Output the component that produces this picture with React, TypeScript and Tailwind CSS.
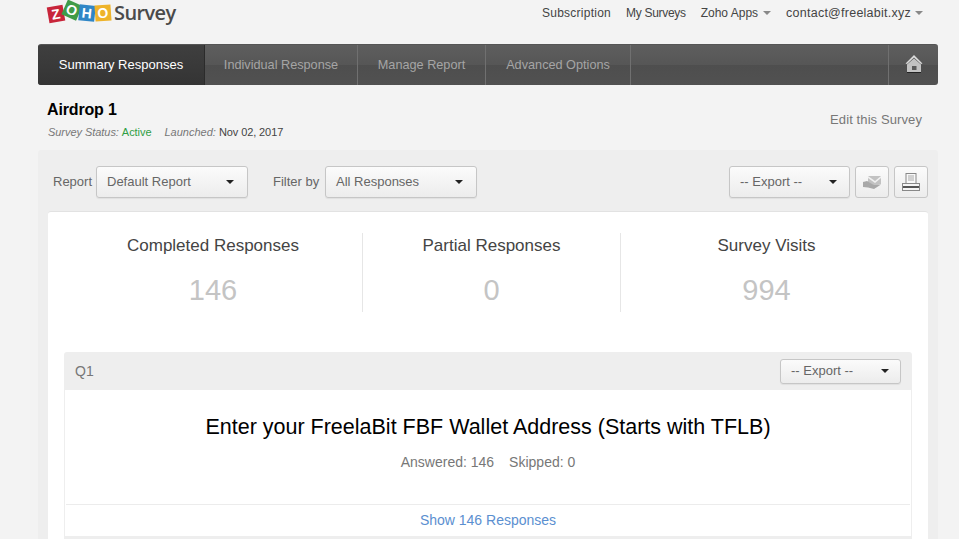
const arial = "font-['Liberation_Sans',Arial,sans-serif]";

function Caret({ className = "border-t-[#222]" }: { className?: string }) {
  return <span className={`inline-block w-0 h-0 border-x-[4px] border-x-transparent border-t-[4px] ${className}`} />;
}

function Select({ label, w, h = "h-[32px]", pl = "pl-[10px]", pr = "pr-[13px]" }: { label: string; w: string; h?: string; pl?: string; pr?: string }) {
  return (
    <div className={`${w} ${h} ${pl} ${pr} flex items-center justify-between rounded-[3px] border border-[#c6c6c6] bg-gradient-to-b from-[#fbfbfb] to-[#ececec] text-[13px] text-[#666] shadow-[0_1px_1px_rgba(0,0,0,0.06)]`}>
      <span>{label}</span>
      <Caret />
    </div>
  );
}

function Logo() {
  const tiles = [
    { c: "Z", bg: "bg-[#c8253a]", r: "-rotate-[10deg]", mt: "mt-[6px]" },
    { c: "O", bg: "bg-[#3f9b48]", r: "rotate-[24deg]", mt: "mt-[2px]" },
    { c: "H", bg: "bg-[#2f86c6]", r: "rotate-[6deg]", mt: "mt-[5px]" },
    { c: "O", bg: "bg-[#eeb32a]", r: "-rotate-[4deg]", mt: "mt-[5px]" },
  ];
  return (
    <div className="flex items-start">
      {tiles.map((t, i) => (
        <span key={i} className={`${t.bg} ${t.r} ${t.mt} w-[15.5px] h-[16px] flex items-center justify-center text-white font-bold text-[14px] leading-none`}>{t.c}</span>
      ))}
      <span className="ml-[4px] mt-[1px] text-[20px] leading-[24px] font-['Open_Sans',sans-serif] font-semibold text-[#4a4a4a] tracking-[-0.6px]">Survey</span>
    </div>
  );
}

function Tab({ label, active, w }: { label: string; active?: boolean; w: string }) {
  return (
    <div className={`${w} h-full flex items-center justify-center border-r ${active ? "text-[13px] bg-gradient-to-b from-[#3f3f3f] to-[#343434] text-white border-r-[#2b2b2b]" : "pt-[1px] text-[12.7px] border-[#707070] text-[#a5a5a5]"}`}>
      {label}
    </div>
  );
}

function Stat({ title, value, w, border }: { title: string; value: string; w: string; border?: boolean }) {
  return (
    <div className={`${w} h-[79px] flex flex-col items-center ${border ? "border-r border-[#e6e6e6]" : ""}`}>
      <div className="mt-[1px] text-[17px] leading-[24px] text-[#444]">{title}</div>
      <div className="mt-[14px] text-[29px] leading-[36px] text-[#c4c4c4]">{value}</div>
    </div>
  );
}

export default function App() {
  return (
    <div className={`w-[959px] h-[539px] overflow-hidden bg-[#f3f3f3] ${arial}`}>
      <div className="h-[44px] pl-[48px] pr-[36px] flex justify-between items-start">
        <Logo />
        <div className="flex items-center text-[12px] text-[#444] mt-[5px] h-[16px]">
          <span className="tracking-[0.25px]">Subscription</span>
          <span className="ml-[15px] -tracking-[0.3px]">My Surveys</span>
          <span className="ml-[15px] flex items-center gap-[5px]">Zoho Apps <Caret className="border-t-[#888]" /></span>
          <span className="ml-[15px] flex items-center gap-[4px] text-[12.5px] tracking-[0.25px]">contact@freelabit.xyz <Caret className="border-t-[#888]" /></span>
        </div>
      </div>

      <div className="ml-[38px] w-[900px] h-[41px] rounded-[3px] overflow-hidden flex bg-[linear-gradient(180deg,#5e5e5e_0%,#565656_50%,#4e4e4e_50%,#515151_100%)] border-t border-[#555]">
        <Tab label="Summary Responses" active w="w-[167px]" />
        <Tab label="Individual Response" w="w-[153px]" />
        <Tab label="Manage Report" w="w-[128px]" />
        <Tab label="Advanced Options" w="w-[145px]" />
        <div className="flex-1" />
        <div className="w-[50px] flex items-center justify-center border-l border-[#707070]">
          <svg className="-mt-[3px]" width="20" height="20" viewBox="0 0 20 20">
            <path d="M10 1 L1.5 9.5 L3 10 L10 3.5 L17 10 L18.5 9.5 Z" fill="#dcdcdc" />
            <path d="M3 10.5 L10 4.5 L17 10.5 V18 H3 Z" fill="#c2c2c2" />
            <rect x="8" y="12" width="4.5" height="4" fill="#5a5a5a" />
            <rect x="3" y="18" width="14" height="1" fill="#222" />
          </svg>
        </div>
      </div>

      <div className="pl-[47px] pr-[37px] mt-[14px] h-[51px] flex justify-between">
        <div>
          <div className="text-[16px] leading-[22px] font-bold text-black tracking-[-0.15px]">Airdrop 1</div>
          <div className="mt-[4px] text-[11px] leading-[14px] flex gap-[13px] pl-[1px]">
            <span className="text-[#777] italic -tracking-[0.05px]">Survey Status: <span className="not-italic text-[#2f9e44]">Active</span></span>
            <span className="text-[#777] italic">Launched: <span className="not-italic text-[#444] -tracking-[0.1px]">Nov 02, 2017</span></span>
          </div>
        </div>
        <div className="text-[13px] text-[#777] mt-[11px] tracking-[0.1px]">Edit this Survey</div>
      </div>

      <div className="ml-[38px] w-[900px] h-[400px] rounded-[3px] bg-[#eeeeee] px-[10px] pt-[16px]">
        <div className="h-[45px] flex items-start pl-[5px] text-[13px] text-[#666]">
          <div className="w-[38px] h-[32px] flex items-center mr-[5px]">Report</div>
          <Select label="Default Report" w="w-[152px]" />
          <div className="w-[47px] h-[32px] flex items-center ml-[25px] mr-[5px] whitespace-nowrap">Filter by</div>
          <Select label="All Responses" w="w-[152px]" />
          <div className="flex-1" />
          <Select label="-- Export --" w="w-[121px]" pr="pr-[12px]" />
          <div className="ml-[5px] w-[34px] h-[32px] rounded-[3px] border border-[#c6c6c6] bg-gradient-to-b from-[#fbfbfb] to-[#ececec] flex items-center justify-center">
            <svg width="22" height="18" viewBox="0 0 22 18">
              <path d="M7 3 H20 V11 L14 13 L7 9 Z" fill="#c2c2c2" />
              <path d="M7 3 L14 8 L20 3 L20 5 L14 10 L7 5 Z" fill="#f0f0f0" />
              <path d="M2 9 L6 8 L13 12 H17 L20 11.5 L13 16 L7 14.5 L2 14 Z" fill="#a8a8a8" />
            </svg>
          </div>
          <div className="ml-[5px] w-[34px] h-[32px] rounded-[3px] border border-[#c6c6c6] bg-gradient-to-b from-[#fbfbfb] to-[#ececec] flex items-center justify-center">
            <svg width="18" height="18" viewBox="0 0 18 18">
              <rect x="4" y="0.5" width="10" height="10" fill="#f8f8f8" stroke="#888" />
              <path d="M6 3 H12 M6 5 H12 M6 7 H12" stroke="#aaa" />
              <rect x="0.5" y="10.5" width="17" height="7" fill="#f4f4f4" stroke="#888" />
              <rect x="1" y="13" width="16" height="2" fill="#555" />
            </svg>
          </div>
        </div>

        <div className="h-[340px] rounded-t-[3px] bg-white border-t border-[#e2e2e2] px-[16px] pt-[21px]">
          <div className="flex h-[79px]">
            <Stat title="Completed Responses" value="146" w="w-[299px]" border />
            <Stat title="Partial Responses" value="0" w="w-[258px]" border />
            <Stat title="Survey Visits" value="994" w="w-[291px]" />
          </div>

          <div className="mt-[40px] rounded-t-[3px] bg-[#eeeeee] pb-[3px]">
            <div className="h-[38px] px-[11px] flex items-center justify-between text-[14px] text-[#777]">
              <span>Q1</span>
              <Select label="-- Export --" w="w-[121px]" h="h-[25px]" pr="pr-[11px]" />
            </div>
            <div className="mx-[1px] bg-white">
              <div className="h-[114px] flex flex-col items-center">
                <div className="mt-[24px] text-[21.5px] leading-[26px] text-black">Enter your FreelaBit FBF Wallet Address (Starts with TFLB)</div>
                <div className="mt-[13px] text-[14px] leading-[18px] text-[#777] flex gap-[15px]">
                  <span>Answered: 146</span>
                  <span>Skipped: 0</span>
                </div>
              </div>
              <div className="h-[32px] mx-[1px] border-t border-[#ececec] flex items-center justify-center text-[14px] text-[#5b8fd0]">Show 146 Responses</div>
            </div>
          </div>
        </div>
      </div>
    </div>
  );
}
